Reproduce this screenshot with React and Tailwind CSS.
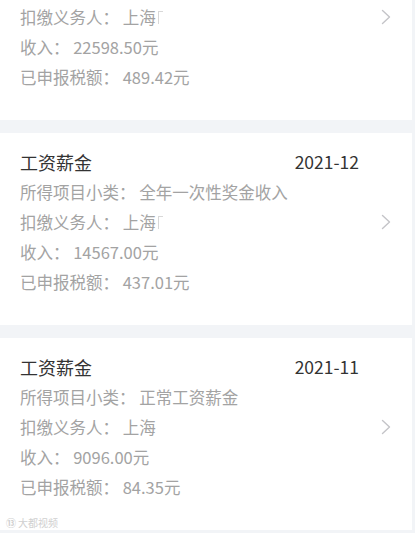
import React from "react";

const records = [
  {
    month: "2022-01",
    sub: "正常工资薪金",
    payer: "上海",
    smudge: true,
    income: "22598.50",
    tax: "489.42",
  },
  {
    month: "2021-12",
    sub: "全年一次性奖金收入",
    payer: "上海",
    smudge: true,
    income: "14567.00",
    tax: "437.01",
  },
  {
    month: "2021-11",
    sub: "正常工资薪金",
    payer: "上海",
    smudge: false,
    income: "9096.00",
    tax: "84.35",
  },
];

const Chevron = () => (
  <svg width="10" height="16" viewBox="0 0 10 16" fill="none">
    <polyline
      points="1.5,1.5 8.5,8 1.5,14.5"
      stroke="#c4c4c8"
      strokeWidth="1.4"
      strokeLinecap="round"
      strokeLinejoin="round"
    />
  </svg>
);

// the first card is scrolled past its top, so only its lower rows show
const RecordCard = ({ r, partial }) => (
  <div
    className={`bg-white flex items-end pl-5 pr-[21px] pb-[28px] ${
      partial ? "pt-[2px]" : "pt-[14px]"
    }`}
  >
    <div className="flex-1">
      {!partial && (
        <div className="h-[30px] flex items-center justify-between text-[18px] text-[#333]">
          <span>工资薪金</span>
          <span className="text-[17.5px]">{r.month}</span>
        </div>
      )}
      <div className="text-[16.5px] text-[#a3a3a3] leading-[30px]">
        {!partial && <p>所得项目小类： {r.sub}</p>}
        <p className="flex items-center">
          <span>扣缴义务人： {r.payer}</span>
          {/* blurred-out remainder of the payer name */}
          {r.smudge && (
            <span className="ml-[2px] inline-block w-[5px] h-[13px] border-l border-t border-[#d8d8d8]" />
          )}
        </p>
        <p>收入： {r.income}元</p>
        <p>已申报税额： {r.tax}元</p>
      </div>
    </div>
    <div className="ml-[22px] w-[10px] mb-[67px] flex items-center">
      <Chevron />
    </div>
  </div>
);

export default function App() {
  return (
    <div
      className="w-[415px] h-[533px] overflow-hidden bg-[#f2f4f7] relative"
      style={{ fontFamily: '"Noto Sans CJK SC", "Noto Sans", sans-serif' }}
    >
      <div className="mr-[3px] flex flex-col gap-[13px]">
        {records.map((r, i) => (
          <RecordCard key={r.month} r={r} partial={i === 0} />
        ))}
      </div>
      {/* watermark */}
      <div className="absolute left-[6px] top-[515px] flex items-center gap-[2px] text-[10px] text-[#d0d0d0]">
        <span className="font-bold">⑬</span>
        <span>大都视频</span>
      </div>
    </div>
  );
}
